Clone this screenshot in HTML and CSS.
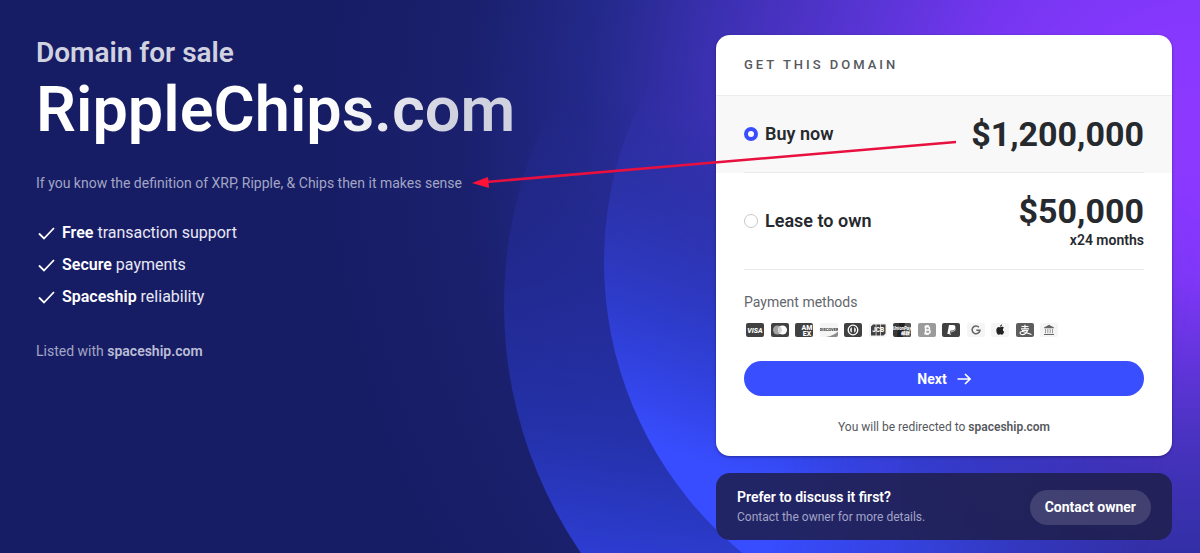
FILE: index.html
```
<!DOCTYPE html>
<html lang="en">
<head>
  <meta charset="UTF-8">
  <meta name="viewport" content="width=device-width, initial-scale=1.0">
  <title>RippleChips.com - Domain for sale</title>
  <link rel="stylesheet" href="styles.css">
</head>
<body>
  <svg class="backdrop" viewBox="0 0 1200 553" preserveAspectRatio="xMidYMid slice" aria-hidden="true">
    <defs>
      <radialGradient id="glow" gradientUnits="userSpaceOnUse" cx="1190" cy="130" r="860">
        <stop offset="0" stop-color="#8d38ff"/>
        <stop offset="0.1" stop-color="#8838ff"/>
        <stop offset="0.26" stop-color="#7536f0"/>
        <stop offset="0.38" stop-color="#5c35d8"/>
        <stop offset="0.57" stop-color="#3a30b0"/>
        <stop offset="0.7" stop-color="#23298a"/>
        <stop offset="0.85" stop-color="#1a206c"/>
        <stop offset="1" stop-color="#171d65"/>
      </radialGradient>
      <linearGradient id="outerRing" gradientUnits="userSpaceOnUse" x1="590" y1="570" x2="660" y2="110">
        <stop offset="0" stop-color="#2f3fd8"/>
        <stop offset="0.3" stop-color="#2533ae" stop-opacity="0.9"/>
        <stop offset="0.62" stop-color="#242c9a" stop-opacity="0.7"/>
        <stop offset="0.85" stop-color="#242b92" stop-opacity="0.4"/>
        <stop offset="1" stop-color="#262c96" stop-opacity="0"/>
      </linearGradient>
      <linearGradient id="innerRing" gradientUnits="userSpaceOnUse" x1="680" y1="530" x2="830" y2="120">
        <stop offset="0" stop-color="#384dff"/>
        <stop offset="0.16" stop-color="#384dff"/>
        <stop offset="0.4" stop-color="#3040d8" stop-opacity="0.9"/>
        <stop offset="0.7" stop-color="#2e36b4" stop-opacity="0.6"/>
        <stop offset="1" stop-color="#3530ac" stop-opacity="0"/>
      </linearGradient>
      <linearGradient id="fadeRight" gradientUnits="userSpaceOnUse" x1="700" y1="400" x2="1160" y2="480">
        <stop offset="0" stop-color="#fff"/>
        <stop offset="0.2" stop-color="#fff"/>
        <stop offset="1" stop-color="#000"/>
      </linearGradient>
      <mask id="leftSide">
        <rect width="1200" height="553" fill="url(#fadeRight)"/>
      </mask>
      <linearGradient id="floor" x1="0" y1="0" x2="0" y2="1">
        <stop offset="0.5" stop-color="#2c2f9e" stop-opacity="0"/>
        <stop offset="1" stop-color="#2c2f9e" stop-opacity="0.75"/>
      </linearGradient>
    </defs>
    <rect width="1200" height="553" fill="url(#glow)"/>
    <rect x="900" width="300" height="553" fill="url(#floor)"/>
    <g mask="url(#leftSide)">
      <circle cx="942" cy="305" r="438" fill="url(#outerRing)"/>
      <circle cx="979" cy="262" r="375" fill="url(#innerRing)"/>
    </g>
  </svg>

  <main class="page">
    <section class="intro">
      <h2 class="tagline">Domain for sale</h2>
      <h1 class="domain">RippleChips.com</h1>
      <p class="description">If you know the definition of XRP, Ripple, &amp; Chips then it makes sense</p>
      <ul class="features">
        <li>
          <svg class="check" viewBox="0 0 20 16"><path d="M3 8.5 8 13.5 18 3"/></svg>
          <span><strong>Free</strong> transaction support</span>
        </li>
        <li>
          <svg class="check" viewBox="0 0 20 16"><path d="M3 8.5 8 13.5 18 3"/></svg>
          <span><strong>Secure</strong> payments</span>
        </li>
        <li>
          <svg class="check" viewBox="0 0 20 16"><path d="M3 8.5 8 13.5 18 3"/></svg>
          <span><strong>Spaceship</strong> reliability</span>
        </li>
      </ul>
      <p class="listed">Listed with <a href="#">spaceship.com</a></p>
    </section>

    <section class="side">
      <form class="card">
        <h3 class="card-title">Get this domain</h3>
        <div class="option selected">
          <div class="option-inner">
            <input type="radio" name="plan" id="buy" checked>
            <label for="buy">Buy now</label>
            <div class="price">$1,200,000</div>
          </div>
        </div>
        <div class="option lease">
          <div class="option-inner">
            <input type="radio" name="plan" id="lease">
            <label for="lease">Lease to own</label>
            <div class="price">$50,000<small>x24 months</small></div>
          </div>
        </div>

        <div class="payment">
          <p class="payment-label">Payment methods</p>
          <div class="methods">
            <!-- Visa -->
            <svg viewBox="0 0 18 14"><rect width="18" height="14" rx="2" fill="#414141"/><text x="9" y="9.5" font-size="7" font-style="italic" fill="#fff">VISA</text></svg>
            <!-- Mastercard -->
            <svg viewBox="0 0 18 14"><rect width="18" height="14" rx="2" fill="#414141"/><circle cx="6.5" cy="7" r="4.5" fill="#a3a3a3"/><circle cx="11.5" cy="7" r="4.5" fill="#fff"/><path d="M9 3.3a4.5 4.5 0 0 1 0 7.4 4.5 4.5 0 0 1 0-7.4z" fill="#d2d2d2"/></svg>
            <!-- American Express -->
            <svg viewBox="0 0 18 14"><rect width="18" height="14" rx="2" fill="#414141"/><text x="12" y="6.7" font-size="7" fill="#fff">AM</text><text x="12" y="12.7" font-size="7" fill="#fff">EX</text></svg>
            <!-- Discover -->
            <svg viewBox="0 0 18 14"><rect width="18" height="14" rx="2" fill="#f5f5f5"/><path d="M18 8.5V12a2 2 0 0 1-2 2H6c5-.8 9-2.500 12-5.500z" fill="#8b8b8b"/><text x="9" y="8" font-size="4" fill="#333">DISCOVER</text></svg>
            <!-- Diners Club -->
            <svg viewBox="0 0 18 14"><rect width="18" height="14" rx="2" fill="#414141"/><circle cx="9" cy="7" r="4.800" fill="none" stroke="#fff" stroke-width="1.300"/><path d="M7.800 4.300a3 3 0 0 0 0 5.400zM10.200 4.300a3 3 0 0 1 0 5.400z" fill="#fff"/></svg>
            <!-- JCB -->
            <svg viewBox="0 0 18 14"><rect width="18" height="14" rx="2" fill="#f5f5f5"/><path d="M4 1.500H6.700V12.500H2V3.500zM7.400 1.500H11.300V12.500H7.400zM12 1.500H16.500V10.500L14.500 12.500H12z" fill="#414141"/><text x="9.200" y="9.200" font-size="6.500" fill="#fff">JCB</text></svg>
            <!-- UnionPay -->
            <svg viewBox="0 0 18 14"><rect width="18" height="14" rx="2" fill="#3a3a3a"/><path d="M6 0h6l-2 14H4z" fill="#222"/><path d="M12 0h4a2 2 0 0 1 2 2v10a2 2 0 0 1-2 2h-6z" fill="#555"/><text x="9" y="7" font-size="4.500" font-style="italic" fill="#fff">UnionPay</text><text x="12" y="11.500" font-size="4.500" font-style="italic" fill="#fff">银联</text></svg>
            <!-- Bitcoin -->
            <svg viewBox="0 0 18 14"><rect width="18" height="14" rx="2" fill="#9b9b9b"/><path d="M6.500 3.800h3.400a1.600 1.600 0 0 1 0 3.200H7.500h2.900a1.700 1.700 0 0 1 0 3.400H6.200M7.600 3.800v6.600M8.300 2v1.800M10 2v1.800M8.300 10.400V12M10 10.400V12" fill="none" stroke="#fff" stroke-width="1.500"/></svg>
            <!-- PayPal -->
            <svg viewBox="0 0 18 14"><rect width="18" height="14" rx="2" fill="#414141"/><path d="M7 2h4c2 0 2.700 1.300 2.300 2.900C12.900 6.700 11.500 7.500 9.800 7.500H8.500L7.800 11H5.300z" fill="#fff"/><path d="M13.600 4.500c.7 2.600-.8 4.200-3.300 4.200h-.9L8.800 12H7.300l.2-1h.8L9 8h1c2 0 3.300-1.200 3.600-3.500z" fill="#bbb"/></svg>
            <!-- Google Pay -->
            <svg viewBox="0 0 18 14"><rect width="18" height="14" rx="2" fill="#f5f5f5"/><path d="M11.900 4.200A3.900 3.900 0 1 0 12.900 7.300H9.300" fill="none" stroke="#666" stroke-width="1.600"/></svg>
            <!-- Apple Pay -->
            <svg viewBox="0 0 18 14"><rect width="18" height="14" rx="2" fill="#f5f5f5"/><path d="M9.200 4.300c.6 0 1.100-.5 1.900-.5.800 0 1.400.4 1.800 1-1.600 1-1.300 3.300.3 3.900-.5 1.500-1.300 3-2.300 3-.6 0-.9-.4-1.600-.4s-1 .4-1.600.4C6.500 11.700 5.300 9.600 5.300 7.400c0-2.200 1.200-3.500 2.500-3.500.6 0 1 .4 1.400.4zM9 3.800c0-1.200.9-2.100 2-2.300.1 1.300-.8 2.300-2 2.300z" fill="#222"/></svg>
            <!-- Alipay -->
            <svg viewBox="0 0 18 14"><rect width="18" height="14" rx="2" fill="#5d5d5d"/><path d="M5.500 3.500h7M9 1.800v4M5 5.800h8M6 7.500h5.500C10.500 10 8 11.700 5.800 11.500c-2.500-.3-2.300-3 .2-3 2.500 0 5 1.800 9.500 3" fill="none" stroke="#fff" stroke-width="1.200"/></svg>
            <!-- Bank transfer -->
            <svg viewBox="0 0 18 14"><rect width="18" height="14" rx="2" fill="#f5f5f5"/><path d="M9 1.800 14 4.500v.7H4v-.7zM4 11h10v1H4z" fill="#666"/><path d="M5.500 6v4.300M7.800 6v4.300M10.200 6v4.300M12.500 6v4.300" stroke="#999"/></svg>
          </div>
        </div>

        <button type="submit" class="primary-btn">
          Next
          <svg class="arrow-icon" viewBox="0 0 14 12"><path d="M0.500 6H13M8 1l5 5-5 5"/></svg>
        </button>
        <p class="redirect">You will be redirected to <strong>spaceship.com</strong></p>
      </form>

      <div class="contact">
        <div>
          <h4>Prefer to discuss it first?</h4>
          <p>Contact the owner for more details.</p>
        </div>
        <button type="button" class="contact-btn">Contact owner</button>
      </div>
    </section>
  </main>

  <!-- arrow pointing from the price to the description -->
  <svg class="pointer" viewBox="0 0 1200 553" preserveAspectRatio="xMidYMid slice" aria-hidden="true">
    <path d="M956 142 486 182" stroke="#e8103f" stroke-width="2.500"/>
    <path d="M472 183 488 177 489 188z" fill="#ff1238"/>
  </svg>
</body>
</html>
```
FILE: styles.css
```
* {
  box-sizing: border-box;
}

body {
  position: relative;
  min-height: 100vh;
  margin: 0;
  font-family: Roboto, "Noto Sans CJK SC", sans-serif;
  font-size: 14px;
  line-height: 20px;
  color: #26292e;
  background: #171d65;
}

h1, h2, h3, h4, p, ul {
  margin: 0;
  padding: 0;
}

strong {
  font-weight: 600;
}

.backdrop,
.pointer {
  position: absolute;
  top: 0;
  left: 0;
  width: 100%;
  height: 100%;
}

.pointer {
  pointer-events: none;
}

.page {
  position: relative;
  display: grid;
  grid-template-columns: 1fr 456px;
  gap: 24px;
  padding: 35px 28px 13px 36px;
}

/* left column */
.tagline {
  font-size: 28px;
  font-weight: 600;
  line-height: 36px;
  color: #d1d2e0;
}

.domain {
  width: fit-content;
  font-size: 63px;
  font-weight: 600;
  line-height: 78px;
  background: linear-gradient(100deg, #fff 60%, #d1d2e0 85%);
  background-clip: text;
  -webkit-background-clip: text;
  color: transparent;
}

.description {
  margin-top: 24px;
  color: #a2a5c4;
}

.features {
  display: flex;
  flex-direction: column;
  gap: 8px;
  margin-top: 28px;
  list-style: none;
  font-size: 16px;
  line-height: 24px;
  color: #e8e8f4;
}

.features li {
  display: flex;
  align-items: center;
  gap: 6px;
}

.features strong {
  color: #fff;
}

.check {
  width: 20px;
  height: 16px;
  fill: none;
  stroke: #fff;
  stroke-width: 1.8;
}

.listed {
  margin-top: 32px;
  color: #a2a5c4;
}

.listed a {
  font-weight: 600;
  color: #bbbdd6;
  text-decoration: none;
}

/* right column */
.side {
  display: flex;
  flex-direction: column;
  gap: 17px;
}

.card {
  padding-bottom: 19px;
  background: #fff;
  border-radius: 14px;
  overflow: hidden;
  box-shadow: 0 1px 3px rgba(0, 0, 40, 0.4);
}

.card-title {
  padding: 20px 28px;
  font-size: 13px;
  font-weight: 500;
  letter-spacing: 3px;
  text-transform: uppercase;
  color: #55585d;
  border-bottom: 1px solid #ececee;
}

.option {
  padding: 0 28px;
}

.option.selected {
  background: #f8f8f8;
}

.option-inner {
  display: flex;
  align-items: center;
  min-height: 77px;
  border-bottom: 1px solid #e9eaec;
}

.lease .option-inner {
  min-height: 97px;
}

.option input {
  appearance: none;
  width: 14px;
  height: 14px;
  margin: 0 7px 0 0;
  border: 1px solid #c6c8cc;
  border-radius: 50%;
  background: #fff;
}

.option input:checked {
  border: 4px solid #394eff;
}

.option label {
  font-size: 18px;
  font-weight: 600;
}

.price {
  margin-left: auto;
  font-size: 34px;
  font-weight: 700;
  line-height: 38px;
  text-align: right;
}

.price small {
  display: block;
  font-size: 14px;
  font-weight: 600;
  line-height: 20px;
}

.payment {
  padding: 22px 28px 0;
}

.payment-label {
  color: #63666b;
}

.methods {
  display: flex;
  justify-content: space-between;
  max-width: 316px;
  margin-top: 11px;
  padding: 0 2px;
}

.methods svg {
  width: 18px;
  height: 14px;
}

.methods text {
  font-weight: 800;
  text-anchor: middle;
}

button {
  border: none;
  border-radius: 18px;
  font-family: inherit;
  font-size: 14px;
  font-weight: 700;
  color: #fff;
  cursor: pointer;
}

.primary-btn {
  display: flex;
  align-items: center;
  justify-content: center;
  gap: 10px;
  width: calc(100% - 56px);
  height: 35px;
  margin: 24px 28px 0;
  background: #394eff;
}

.primary-btn:hover {
  background: #2a3de0;
}

.arrow-icon {
  width: 14px;
  height: 12px;
  fill: none;
  stroke: #fff;
  stroke-width: 1.6;
}

.redirect {
  margin-top: 21px;
  font-size: 12px;
  text-align: center;
  color: #55585d;
}

.contact {
  display: flex;
  align-items: center;
  justify-content: space-between;
  padding: 14px 21px 13px;
  background: rgba(30, 30, 74, 0.85);
  border-radius: 14px;
}

.contact h4 {
  font-size: 14px;
  font-weight: 600;
  color: #fff;
}

.contact p {
  font-size: 12px;
  color: #a3a3c6;
}

.contact-btn {
  height: 35px;
  padding: 0 15px;
  background: rgba(255, 255, 255, 0.14);
}
```
